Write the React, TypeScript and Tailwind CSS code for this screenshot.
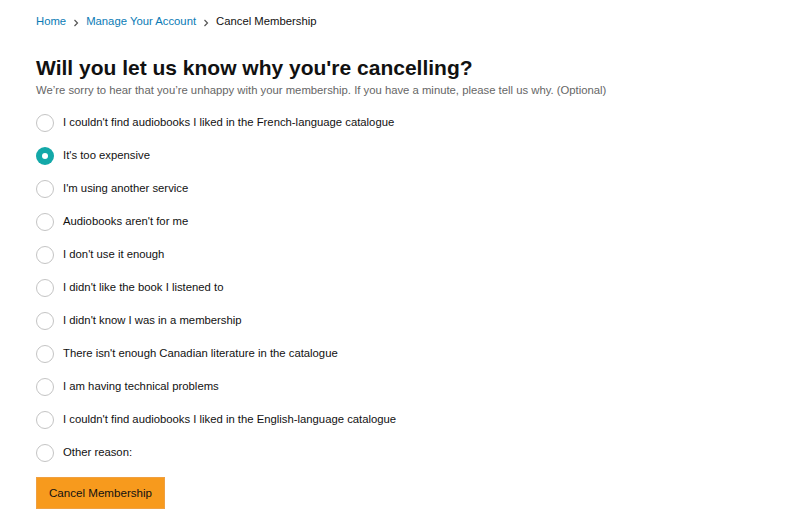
import React, { useState } from 'react';

const reasons = [
  "I couldn't find audiobooks I liked in the French-language catalogue",
  "It's too expensive",
  "I'm using another service",
  "Audiobooks aren't for me",
  "I don't use it enough",
  "I didn't like the book I listened to",
  "I didn't know I was in a membership",
  "There isn't enough Canadian literature in the catalogue",
  "I am having technical problems",
  "I couldn't find audiobooks I liked in the English-language catalogue",
  "Other reason:",
];

const Chevron = () => (
  <svg className="w-[10px] h-[10px] mx-[5px] mt-[3px]" viewBox="0 0 10 10" fill="none" stroke="#555" strokeWidth={1.2}>
    <path d="M3.5 2l3 3-3 3" />
  </svg>
);

export default function App() {
  const [selected, setSelected] = useState(1);

  return (
    <div className="min-h-screen bg-white font-['Liberation_Sans',Arial,sans-serif] text-[#111] pl-[36px] pt-[13px]">
      <nav className="flex items-center text-[11.3px] leading-[16px]">
        <a className="text-[#0a7bb5]">Home</a>
        <Chevron />
        <a className="text-[#0a7bb5]">Manage Your Account</a>
        <Chevron />
        <span className="text-[#111]">Cancel Membership</span>
      </nav>

      <h1 className="mt-[26px] text-[21px] leading-[26px] font-bold text-[#111]">
        Will you let us know why you're cancelling?
      </h1>
      <p className="text-[11.3px] leading-[14px] text-[#666] mt-[2px]">
        We’re sorry to hear that you’re unhappy with your membership. If you have a minute, please tell us why. (Optional)
      </p>

      <div className="flex flex-col mt-[9px]">
        {reasons.map((r, i) => (
          <label key={i} className="flex items-center h-[33px] cursor-pointer" onClick={() => setSelected(i)}>
            {selected === i ? (
              <span className="w-[18px] h-[18px] rounded-full bg-[#13a8a8] flex items-center justify-center">
                <span className="w-[6px] h-[6px] rounded-full bg-white" />
              </span>
            ) : (
              <span className="w-[18px] h-[18px] rounded-full border border-[#c4c4c4] bg-white" />
            )}
            <span className="ml-[9px] text-[11.3px] text-[#111]">{r}</span>
          </label>
        ))}
      </div>

      <button className="mt-[8px] w-[129px] h-[32px] bg-[#f79a1d] border border-[#f0a040] text-[11.6px] text-[#111]">
        Cancel Membership
      </button>
    </div>
  );
}
